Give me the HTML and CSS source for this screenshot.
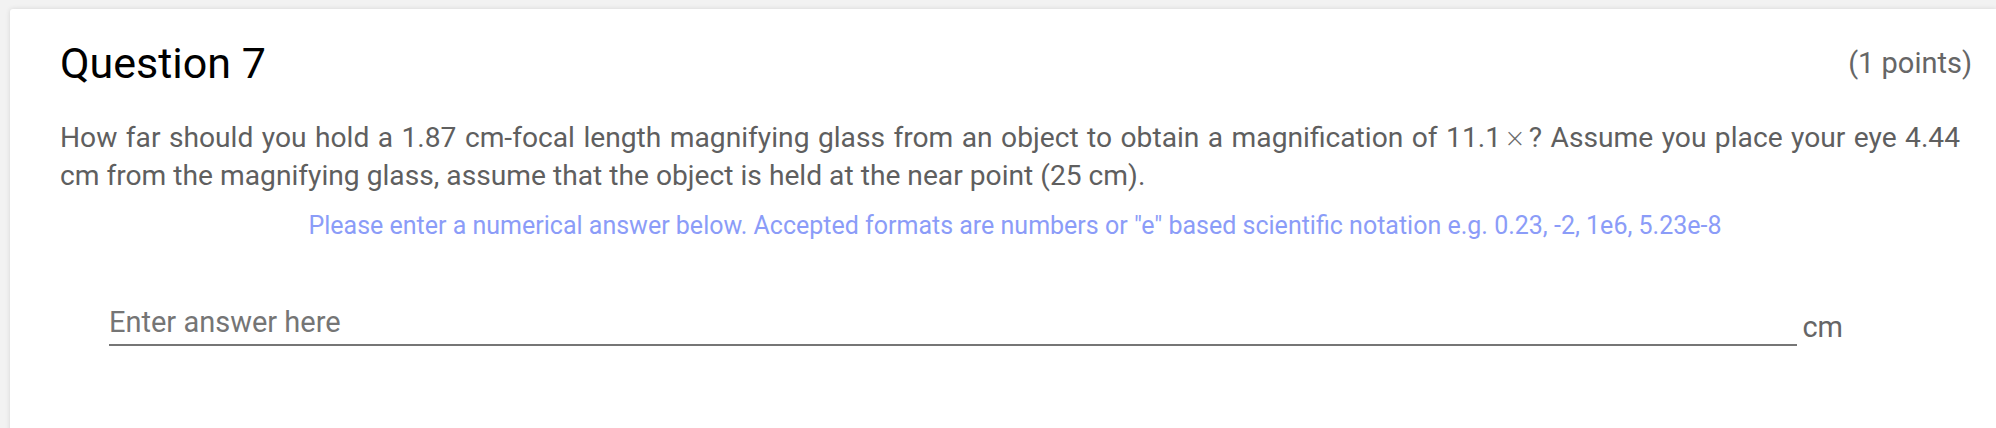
FILE: index.html
```html
<!DOCTYPE html>
<html lang="en">
<head>
<meta charset="utf-8">
<title>Question 7</title>
<link rel="stylesheet" href="styles.css">
</head>
<body>
<div class="card">
  <div class="header">
    <h2 class="title">Question 7</h2>
    <span class="points">(1 points)</span>
  </div>
  <p class="prompt">How far should you hold a 1.87 cm-focal length magnifying glass from an object to obtain a magnification of 11.1<span class="times">×</span>? Assume you place your eye 4.44 cm from the magnifying glass, assume that the object is held at the near point (25 cm).</p>
  <p class="hint">Please enter a numerical answer below. Accepted formats are numbers or "e" based scientific notation e.g. 0.23, -2, 1e6, 5.23e-8</p>
  <div class="answer-row">
    <input class="answer" type="text" placeholder="Enter answer here">
    <span class="unit">cm</span>
  </div>
</div>
</body>
</html>
```
FILE: styles.css
```css
html, body {
  margin: 0;
  padding: 0;
}
body {
  background: #f2f2f2;
  font-family: Roboto, "Liberation Sans", Arial, sans-serif;
  overflow: hidden;
  height: 428px;
}
.card {
  margin: 9px 0 0 10px;
  background: #ffffff;
  box-shadow: 0 0 5px rgba(0, 0, 0, 0.12);
  border-radius: 3px 0 0 0;
  padding: 29px 16px 120px 50px;
  min-height: 400px;
  box-sizing: border-box;
}
.header {
  display: flex;
  justify-content: space-between;
  align-items: center;
  padding-right: 8px;
}
.title {
  margin: 0;
  font-size: 43px;
  font-weight: 400;
  line-height: 50px;
  color: #000;
}
.points {
  font-size: 29px;
  line-height: 34px;
  color: #666666;
}
.prompt {
  margin: 31px 20px 0 0;
  font-size: 28.2px;
  line-height: 37px;
  color: #5f5f5f;
  text-align: justify;
}
.times {
  font-family: "DejaVu Sans", sans-serif;
  font-weight: 200;
  color: #6a6a6a;
  font-size: 26px;
  margin: 0 3px 0 3px;
}
.hint {
  margin: 17px 0 0 0;
  padding-right: 10px;
  font-size: 25px;
  line-height: 29px;
  color: #8b9cf8;
  text-align: center;
}
.answer-row {
  display: flex;
  align-items: flex-end;
  margin-top: 64px;
  padding: 0 137px 0 49px;
}
.answer {
  flex: 1;
  min-width: 0;
  font-family: Roboto, "Liberation Sans", Arial, sans-serif;
  font-size: 29px;
  line-height: 37px;
  height: 37px;
  padding: 0 0 3px 0;
  border: none;
  border-bottom: 2px solid #767676;
  outline: none;
  background: transparent;
  color: #333;
  box-sizing: content-box;
}
.answer::placeholder {
  color: #757575;
  opacity: 1;
}
.unit {
  margin-left: 5px;
  font-size: 29px;
  line-height: 37px;
  color: #666666;
}
```
